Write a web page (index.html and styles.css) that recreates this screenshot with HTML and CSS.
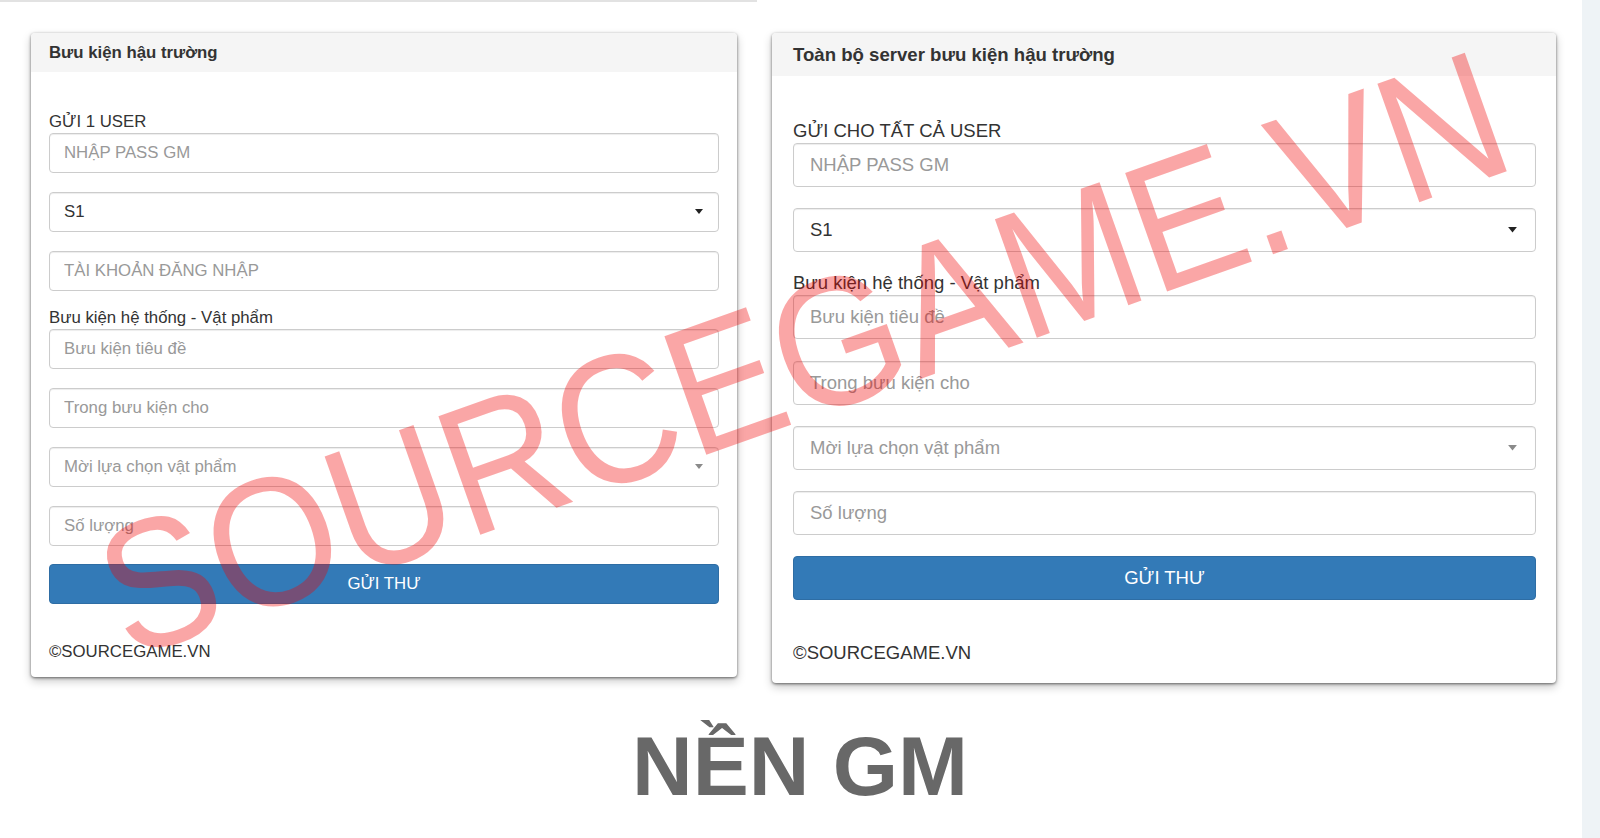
FILE: index.html
```html
<!DOCTYPE html>
<html lang="vi">
<head>
<meta charset="utf-8">
<title>NỀN GM</title>
<link rel="stylesheet" href="styles.css">
</head>
<body>
<div class="page">
  <main class="main">
    <div class="topline"></div>
    <div class="cards">
      <section class="card card-sm">
        <header class="card-head">Bưu kiện hậu trường</header>
        <div class="card-body">
          <label class="lbl">GỬI 1 USER</label>
          <input class="ctl" type="text" placeholder="NHẬP PASS GM">
          <div class="ctl sel"><span>S1</span><svg class="caret" viewBox="0 0 8 5"><polygon points="0,0 8,0 4,5"/></svg></div>
          <input class="ctl" type="text" placeholder="TÀI KHOẢN ĐĂNG NHẬP">
          <label class="lbl">Bưu kiện hệ thống - Vật phẩm</label>
          <input class="ctl" type="text" placeholder="Bưu kiện tiêu đề">
          <input class="ctl" type="text" placeholder="Trong bưu kiện cho">
          <div class="ctl sel ph"><span>Mời lựa chọn vật phẩm</span><svg class="caret" viewBox="0 0 8 5"><polygon points="0,0 8,0 4,5"/></svg></div>
          <input class="ctl" type="text" placeholder="Số lượng">
          <button class="btn" type="button">GỬI THƯ</button>
          <p class="foot">©SOURCEGAME.VN</p>
        </div>
      </section>
      <section class="card card-lg">
        <header class="card-head">Toàn bộ server bưu kiện hậu trường</header>
        <div class="card-body">
          <label class="lbl">GỬI CHO TẤT CẢ USER</label>
          <input class="ctl" type="text" placeholder="NHẬP PASS GM">
          <div class="ctl sel"><span>S1</span><svg class="caret" viewBox="0 0 8 5"><polygon points="0,0 8,0 4,5"/></svg></div>
          <label class="lbl">Bưu kiện hệ thống - Vật phẩm</label>
          <input class="ctl" type="text" placeholder="Bưu kiện tiêu đề">
          <input class="ctl" type="text" placeholder="Trong bưu kiện cho">
          <div class="ctl sel ph"><span>Mời lựa chọn vật phẩm</span><svg class="caret" viewBox="0 0 8 5"><polygon points="0,0 8,0 4,5"/></svg></div>
          <input class="ctl" type="text" placeholder="Số lượng">
          <button class="btn" type="button">GỬI THƯ</button>
          <p class="foot">©SOURCEGAME.VN</p>
        </div>
      </section>
    </div>
    <h1 class="title">NỀN GM</h1>
  </main>
  <aside class="rail"></aside>
</div>
<div class="watermark">SOURCEGAME.VN</div>
</body>
</html>
```
FILE: styles.css
```css
html, body {
  margin: 0;
  padding: 0;
  background: #ffffff;
}
body {
  font-family: "Liberation Sans", Arial, sans-serif;
  color: #333333;
  width: 1600px;
  height: 838px;
  overflow: hidden;
  position: relative;
}
.page {
  display: flex;
  height: 838px;
}
.main {
  flex: 1;
  display: flex;
  flex-direction: column;
}
.rail {
  width: 18px;
  background: #eef3f6;
}
.topline {
  width: 757px;
  height: 2px;
  background: #e2e2e2;
}
.cards {
  display: flex;
  align-items: flex-start;
  gap: 35px;
  margin-top: 31px;
  padding-left: 31px;
}
.card {
  background: #ffffff;
  border-radius: 4px;
  box-shadow: 0 1px 3px rgba(0,0,0,0.55), 0 4px 10px rgba(0,0,0,0.22);
  overflow: hidden;
}
.card-head {
  background: #f5f5f5;
  font-weight: bold;
  display: flex;
  align-items: center;
}
.card-body {
  display: flex;
  flex-direction: column;
}
.lbl {
  display: block;
  margin-bottom: 2px;
  color: #333;
}
.ctl {
  box-sizing: border-box;
  width: 100%;
  border: 1px solid #cccccc;
  border-radius: 4px;
  background: #fff;
  box-shadow: inset 0 1px 1px rgba(0,0,0,0.075);
  font-family: "Liberation Sans", Arial, sans-serif;
  color: #333;
  margin: 0;
  outline: none;
}
.ctl::placeholder {
  color: #999999;
  opacity: 1;
}
.sel {
  display: flex;
  align-items: center;
  justify-content: space-between;
}
.sel.ph span {
  color: #999999;
}
.caret {
  display: block;
  fill: #222;
}
.sel.ph .caret {
  fill: #8a8a8a;
}
.btn {
  box-sizing: border-box;
  width: 100%;
  background: #337ab7;
  border: 1px solid #2e6da4;
  border-radius: 4px;
  color: #ffffff;
  font-family: "Liberation Sans", Arial, sans-serif;
  margin: 0;
  padding: 0;
}
.foot {
  margin: 0;
  color: #333;
}

/* small (left) card */
.card-sm {
  width: 706px;
  font-size: 16.8px;
}
.card-sm .card-head {
  height: 39px;
  padding-left: 18px;
  padding-top: 1px;
  box-sizing: border-box;
  font-size: 16.8px;
}
.card-sm .card-body {
  padding: 41px 18px 16px;
}
.card-sm .lbl {
  line-height: 18px;
}
.card-sm .ctl {
  height: 40px;
  padding: 0 14px;
  font-size: 16.8px;
  margin-bottom: 18.75px;
}
.card-sm .caret {
  width: 8px;
  height: 5px;
  margin-right: 1px;
}
.card-sm .btn {
  height: 40px;
  font-size: 16.8px;
}
.card-sm .foot {
  margin-top: 38.5px;
  line-height: 18px;
}

/* large (right) card */
.card-lg {
  width: 784px;
  font-size: 18.5px;
}
.card-lg .card-head {
  height: 43px;
  padding-left: 21px;
  font-size: 18.6px;
}
.card-lg .card-body {
  padding: 45px 20px 20px 21px;
}
.card-lg .lbl {
  line-height: 20px;
}
.card-lg .ctl {
  height: 44px;
  padding: 0 16px;
  font-size: 18.5px;
  margin-bottom: 21.2px;
}
.card-lg .caret {
  width: 9px;
  height: 5.5px;
  margin-right: 2px;
}
.card-lg .btn {
  height: 44px;
  font-size: 18.5px;
}
.card-lg .foot {
  margin-top: 42.8px;
  line-height: 20px;
}

.title {
  margin: 41.5px 0 0 18px;
  text-align: center;
  font-size: 84px;
  line-height: 1;
  font-weight: bold;
  color: #686868;
}

.watermark {
  position: absolute;
  left: 803px;
  top: 354px;
  transform: translate(-50%, -50%) rotate(-19.5deg) scaleY(1.1);
  font-family: "Liberation Sans", Arial, sans-serif;
  font-size: 166px;
  line-height: 1;
  white-space: nowrap;
  color: rgba(240, 0, 0, 0.35);
  pointer-events: none;
}
```
